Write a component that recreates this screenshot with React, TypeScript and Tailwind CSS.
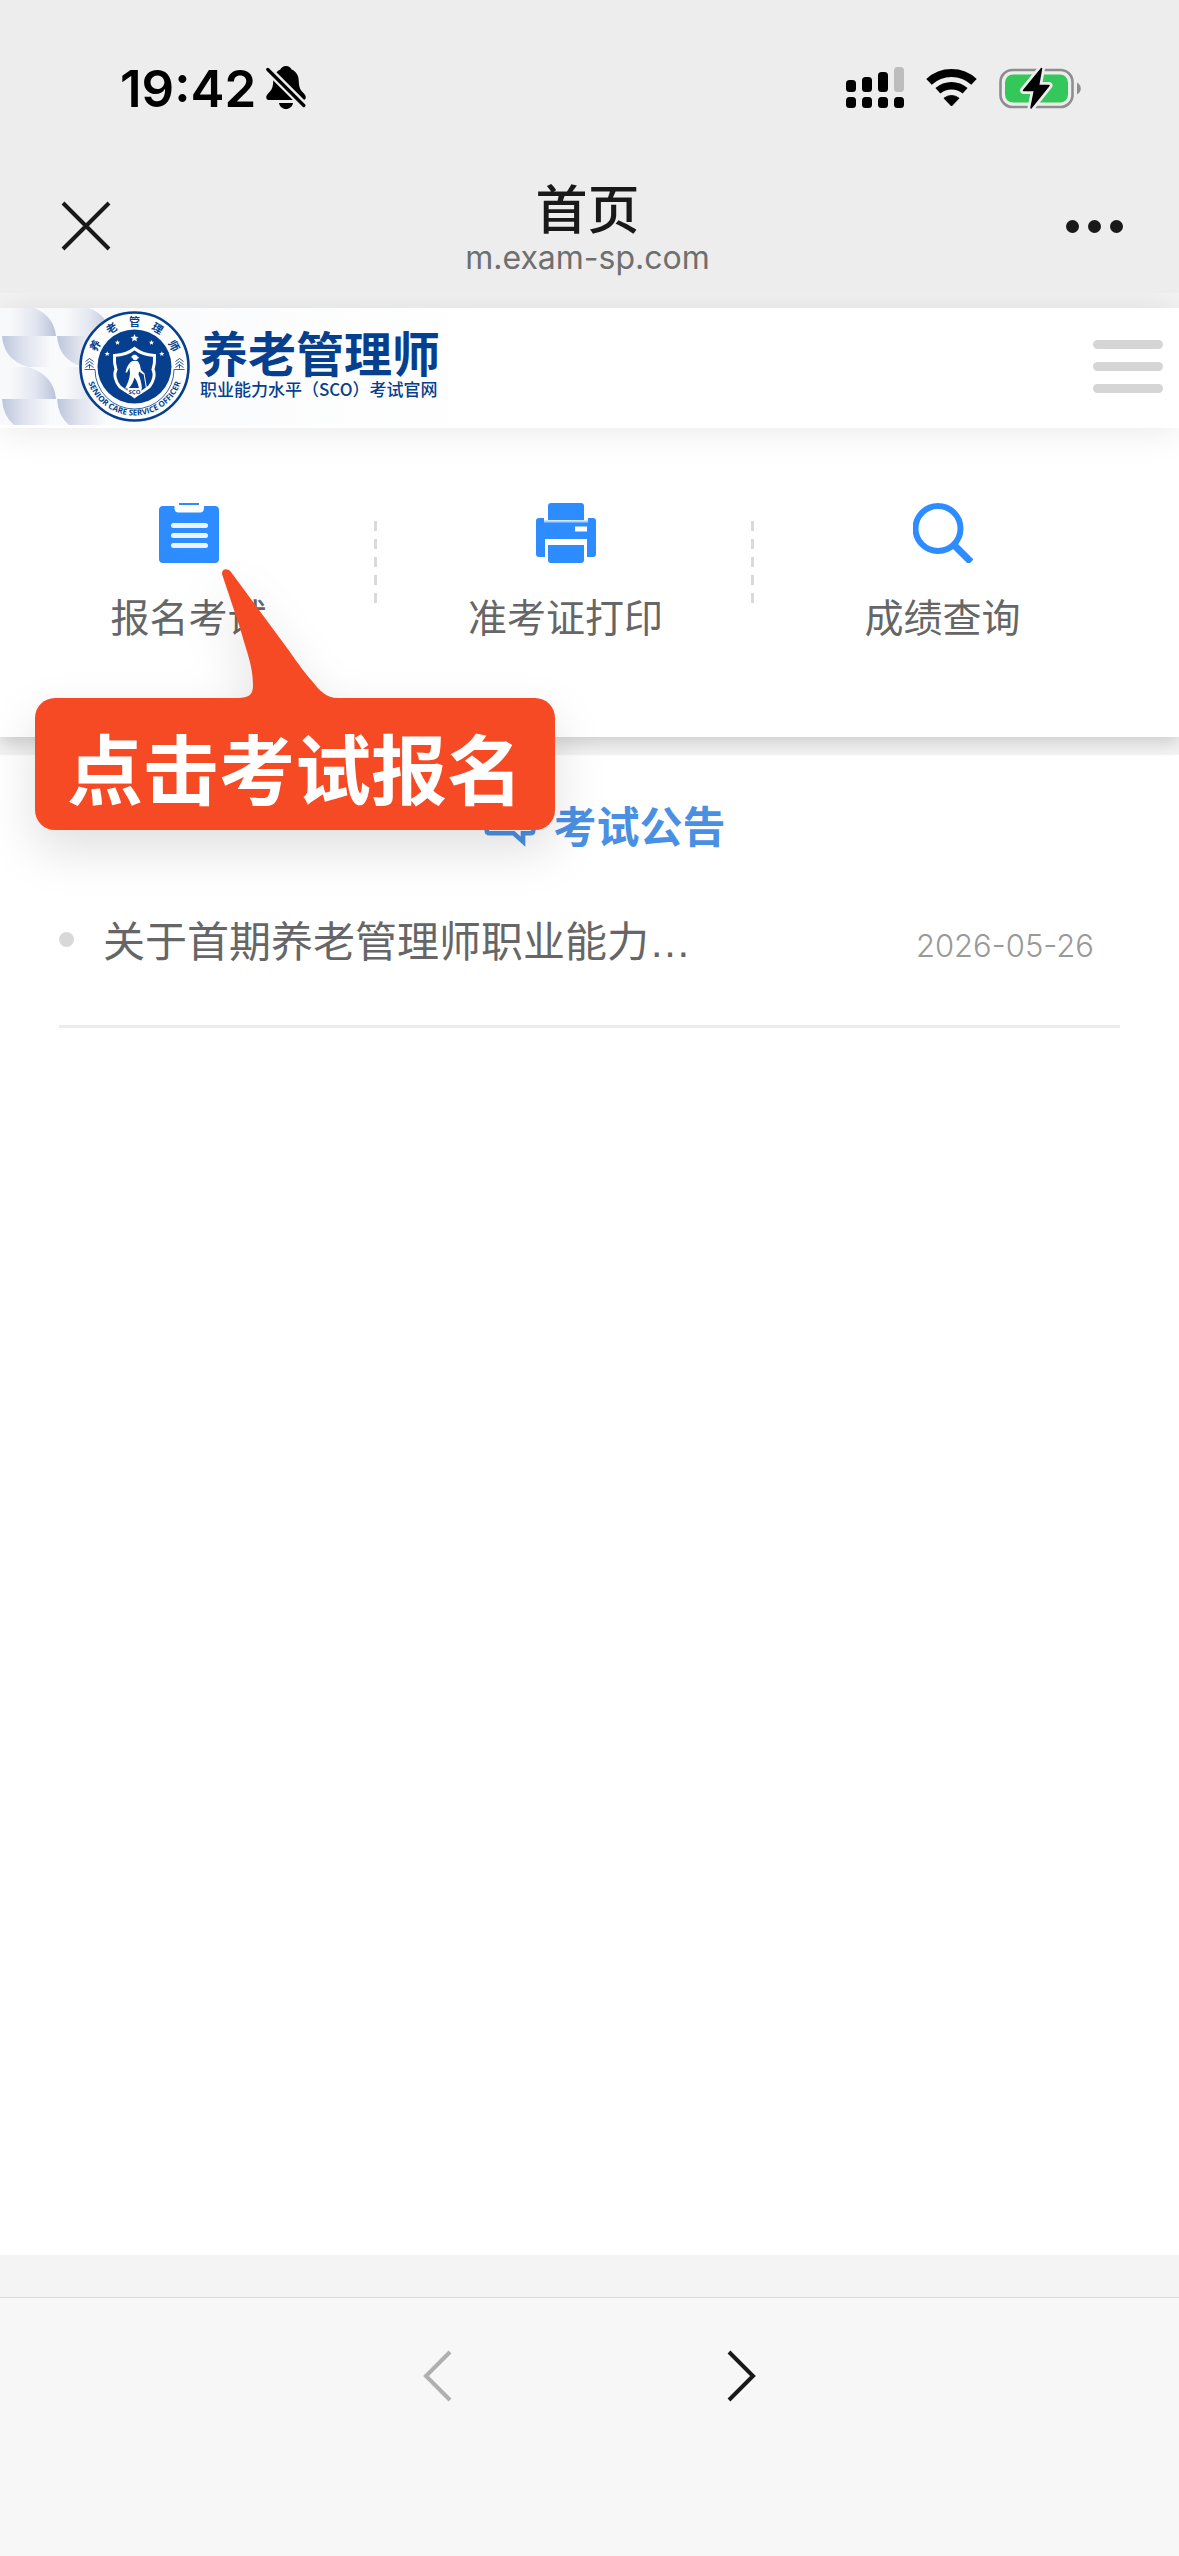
import React from "react";

const STAR = "M0 -4L1.1 -1.3L4 -1.1L1.8 0.7L2.5 3.4L0 1.9L-2.5 3.4L-1.8 0.7L-4 -1.1L-1.1 -1.3Z";

function BellOff() {
  return (
    <svg viewBox="0 0 40 44" className="h-11 w-10" aria-label="静音">
      <path
        d="M20 0C17 0 15 2 14.400 3.600C9.500 5.600 7.200 10 7.200 15.500C7 21 6 23.500 3 26.500C1 28.500 0 30 0.300 32C0.600 33.600 1.700 34 3.200 34H36.800C38.300 34 39.400 33.600 39.700 32C40 30 39 28.500 37 26.500C34 23.500 33 21 32.800 15.500C32.800 10 30.500 5.600 25.600 3.600C25 2 23 0 20 0Z"
        fill="#000"
      />
      <path d="M13 37H27C26.500 40.500 23.500 43 20 43C16.500 43 13.500 40.500 13 37Z" fill="#000" />
      <path d="M-1 0.500L41 42.500" stroke="#ededed" strokeWidth="8" />
      <path d="M1.800 3.500L37.800 39.500" stroke="#000" strokeWidth="3.200" strokeLinecap="round" />
    </svg>
  );
}

function Signal() {
  return (
    <svg viewBox="0 0 58 42" className="h-[42px] w-[58px]" aria-label="信号">
      <rect x="0" y="13" width="10" height="12" rx="3.500" />
      <rect x="16" y="10" width="10" height="15" rx="3.500" />
      <rect x="32" y="5" width="10" height="20" rx="3.500" />
      <rect x="48" y="0" width="10" height="25" rx="3.500" fill="#bdbdbd" />
      {[0, 16, 32, 48].map((x) => (
        <rect key={x} x={x} y="30" width="10" height="11" rx="3.500" />
      ))}
    </svg>
  );
}

function Wifi() {
  return (
    <svg viewBox="0 0 51 38" className="h-[38px] w-[51px]" aria-label="无线网络">
      <path d="M3 12.900A33 33 0 0 1 48 12.900" fill="none" stroke="#000" strokeWidth="8" />
      <path d="M11.900 21.800A20.500 20.500 0 0 1 39.100 21.800" fill="none" stroke="#000" strokeWidth="7.500" />
      <path d="M18 29.200A12 12 0 0 1 33 29.200L25.500 37Z" stroke="#000" strokeWidth="1" strokeLinejoin="round" />
    </svg>
  );
}

function Battery() {
  return (
    <svg viewBox="0 0 82 42" className="h-[42px] w-[82px]" aria-label="充电中">
      <rect x="1.500" y="3" width="72" height="37" rx="12" fill="none" stroke="#8e8e8e" strokeWidth="2.600" />
      <path d="M78 15.500C80.500 17 81.800 19 81.800 21.500C81.800 24 80.500 26 78 27.500Z" fill="#8e8e8e" />
      <rect x="6" y="7.500" width="63" height="28" rx="8" fill="#34c759" />
      <path
        d="M42.500 1.500L24.500 23.500H35.500L32 41L50 18.500H39.500Z"
        fill="#000"
        stroke="#ededed"
        strokeWidth="7"
        strokeLinejoin="round"
        paintOrder="stroke"
      />
      <path d="M42.500 1.500L24.500 23.500H35.500L32 41L50 18.500H39.500Z" fill="#000" stroke="#000" strokeWidth="1.500" strokeLinejoin="round" />
    </svg>
  );
}

function Emblem() {
  const ring = [
    { c: "养", a: -62 },
    { c: "老", a: -31 },
    { c: "管", a: 0 },
    { c: "理", a: 31 },
    { c: "师", a: 62 },
  ];
  return (
    <svg viewBox="0 0 192 117" className="h-[117px] w-48 shrink-0" aria-label="养老管理师徽标">
      <defs>
        <linearGradient id="toRight">
          <stop offset="0.150" stopColor="#c3cbe0" stopOpacity="0" />
          <stop offset="0.600" stopColor="#c3cbe0" stopOpacity="0.400" />
          <stop offset="1" stopColor="#b9c2da" />
        </linearGradient>
        <linearGradient id="toLeft">
          <stop offset="0" stopColor="#bcc5dc" />
          <stop offset="0.400" stopColor="#c3cbe0" stopOpacity="0.500" />
          <stop offset="0.900" stopColor="#c3cbe0" stopOpacity="0" />
        </linearGradient>
        <path id="ringBottom" d="M-49 0A49 49 0 0 0 49 0" />
      </defs>
      {[0, 55].map((x) => (
        <g key={x} transform={`translate(${x} 0)`}>
          <path d="M2 28V0H34Q54 8 56 28Z" fill="url(#toRight)" />
          <path d="M2 28H56V59H28Q4 52 2 28Z" fill="url(#toLeft)" />
          <path d="M2 91V59H28Q54 67 56 91Z" fill="url(#toRight)" />
          <path d="M2 91H56V117H14Q3 108 2 91Z" fill="url(#toLeft)" />
        </g>
      ))}
      <g transform="translate(134.500 58.500)" fill="#063f8e">
        <circle r="54" fill="#fff" stroke="#063f8e" strokeWidth="2.600" />
        <circle r="37" />
        {ring.map((r) => (
          <text
            key={r.c}
            transform={`rotate(${r.a})`}
            y="-40.500"
            textAnchor="middle"
            className="font-['Noto_Sans_CJK_SC',sans-serif] text-[11px] font-bold"
          >
            {r.c}
          </text>
        ))}
        <text className="font-['Open_Sans',sans-serif] text-[8px] font-bold">
          <textPath href="#ringBottom" startOffset="50%" textAnchor="middle">
            SENIOR CARE SERVICE OFFICER
          </textPath>
        </text>
        <path d="M-50 3H-39.500A39.500 39.500 0 0 0 39.500 3H50" fill="none" stroke="#063f8e" strokeWidth="0.800" />
        {[-45, 45].map((x) => (
          <path
            key={x}
            d={`M${x - 4} -5L${x} -8L${x + 4} -5M${x - 4} -2L${x} -5L${x + 4} -2M${x - 4} 1L${x} -2L${x + 4} 1M${x} -2V2`}
            fill="none"
            stroke="#063f8e"
            strokeWidth="0.900"
          />
        ))}
        <g fill="#fff">
          <path d={STAR} transform="translate(0 -28.500)" />
          <path d={STAR} transform="translate(-17 -24) scale(0.650)" />
          <path d={STAR} transform="translate(17 -24) scale(0.650)" />
          <path d={STAR} transform="translate(-27.300 -12.700) scale(0.650)" />
          <path d={STAR} transform="translate(27.300 -12.700) scale(0.650)" />
        </g>
        <path
          d="M0 -18C-5 -14 -12 -11.500 -20 -11C-20.500 -4 -19.500 0 -18.500 3C-21 8 -19 15 -15 20C-11 24 -5 26 0 30C5 26 11 24 15 20C19 15 21 8 18.500 3C19.500 0 20.500 -4 20 -11C12 -11.500 5 -14 0 -18Z"
          fill="none"
          stroke="#fff"
          strokeWidth="3"
        />
        <g fill="#fff">
          <path d="M-4 -9.500L-2.500 -10C-2.500 -12.500 2.500 -12.500 3 -10L5 -8.500L3 -8C3 -5.500 -1.500 -5.500 -2 -8.500Z" />
          <path d="M-2 -5.500L3 -5.500C5.500 -3 6 1 6.500 3.500L10 7L9 8L4.500 5L4 8C6 12 7 17 7.500 22H4.500C3.500 17 2 13.500 0 11C-1 15 -3 19 -6 22H-9.500C-7 17 -5 13 -4.500 7L-5 1L-7.500 6H-9C-8 1 -6 -3.500 -2 -5.500Z" />
        </g>
        <path d="M9.500 7L12 22" stroke="#fff" strokeWidth="1" />
        <rect x="-7" y="21.500" width="14" height="6" fill="#fff" />
        <text y="27" textAnchor="middle" className="font-['Open_Sans',sans-serif] text-[6px] font-bold">
          SCO
        </text>
      </g>
    </svg>
  );
}

function ClipboardIcon() {
  return (
    <svg viewBox="0 0 60 60" className="size-[60px]" aria-hidden="true">
      <path d="M20 0H40V2H20Z" fill="#2d8cff" />
      <path d="M4 3H15.500V5C15.500 8 17 9.500 19.500 9.500H41C43.500 9.500 45 8 45 5V3H56C58.500 3 60 4.500 60 7V56C60 58.500 58.500 60 56 60H4C1.500 60 0 58.500 0 56V7C0 4.500 1.500 3 4 3Z" fill="#2d8cff" />
      <path d="M14.500 22.500H46.500M14.500 32.500H46.500M14.500 42.500H46.500" stroke="#eaf3ff" strokeWidth="5" strokeLinecap="round" />
    </svg>
  );
}

function PrinterIcon() {
  return (
    <svg viewBox="0 0 60 60" className="size-[60px]" aria-hidden="true" fill="#2d8cff">
      <path d="M15 0H45Q48 0 48 3V17H12V3Q12 0 15 0Z" />
      <path d="M3 15H8V19H52V15H57Q60 15 60 18V51Q60 54 57 54H51V36H9V54H3Q0 54 0 51V18Q0 15 3 15Z" />
      <path d="M8 18.500H52" stroke="#a9d0ff" strokeWidth="2" />
      <path d="M39 26H51" stroke="#fff" strokeWidth="5" />
      <path d="M12 42H48V57Q48 60 45 60H15Q12 60 12 57Z" />
    </svg>
  );
}

function SearchIcon() {
  return (
    <svg viewBox="0 0 60 60" className="size-[60px]" aria-hidden="true">
      <circle cx="25" cy="25.500" r="22.500" fill="none" stroke="#2d8cff" strokeWidth="6" />
      <path d="M41 42L58 59" stroke="#2d8cff" strokeWidth="7" />
    </svg>
  );
}

const entries = [
  { label: "报名考试", icon: <ClipboardIcon /> },
  { label: "准考证打印", icon: <PrinterIcon /> },
  { label: "成绩查询", icon: <SearchIcon /> },
];

function Divider() {
  return (
    <svg viewBox="0 0 3 84" className="absolute top-[93px] right-0 h-[84px] w-[3px]" aria-hidden="true">
      <path d="M1.500 0V84" stroke="#d9d9d9" strokeWidth="3" strokeDasharray="10 8" />
    </svg>
  );
}

function Callout() {
  return (
    <div className="pointer-events-none absolute top-[141px] left-[35px] z-20 drop-shadow-[0_20px_24px_rgba(0,0,0,0.12)]">
      <svg viewBox="0 0 320 130" className="block h-[130px] w-80" aria-hidden="true">
        <path
          d="M187 5C186.500 -0.500 193 -1.500 196 3L255 83C264 96 270 104 277 112C285 122 291 129 303 129V130H200V129C213 129 218 127 218 116C218 97 212 84 205 59Z"
          fill="#f64a24"
        />
      </svg>
      <div className="-mt-px flex h-[132px] w-[520px] items-center justify-center rounded-[20px] bg-[#f64a24] pt-1 text-[76px] leading-none font-bold text-white">
        点击考试报名
      </div>
    </div>
  );
}

export default function App() {
  return (
    <div className="flex min-h-screen flex-col bg-[#f4f4f4] font-['Noto_Sans_CJK_SC',sans-serif]">
      <header className="bg-[#ededed]">
        <div className="flex h-44 items-center justify-between pr-[98px] pl-[120px]">
          <div className="flex items-center gap-[10px]">
            <span className="font-[Inter,sans-serif] text-[51px] leading-none font-semibold text-black">19:42</span>
            <BellOff />
          </div>
          <div className="flex items-center gap-[22px]">
            <Signal />
            <Wifi />
            <Battery />
          </div>
        </div>
        <div className="grid h-[117px] grid-cols-[60px_1fr_60px] items-start px-14">
          <button aria-label="关闭" className="mt-5 flex size-[60px] items-center justify-center">
            <svg viewBox="0 0 50 50" className="size-[50px]">
              <path d="M2 2L48 48M48 2L2 48" stroke="#191919" strokeWidth="4" />
            </svg>
          </button>
          <div className="flex flex-col items-center pr-1">
            <h1 className="text-[52px] leading-[62px] font-medium text-[#191919]">首页</h1>
            <p className="font-[Inter,sans-serif] text-[32px] leading-10 text-[#6f6f6f]">m.exam-sp.com</p>
          </div>
          <button aria-label="更多" className="mt-5 flex h-[60px] items-center justify-end gap-[9px]">
            <span className="size-[13px] rounded-full bg-[#191919]" />
            <span className="size-[13px] rounded-full bg-[#191919]" />
            <span className="size-[13px] rounded-full bg-[#191919]" />
          </button>
        </div>
      </header>

      <main className="relative flex flex-1 flex-col overflow-hidden bg-[#f4f4f4] pt-[15px]">
        <div className="relative z-10 flex h-[120px] items-start justify-between bg-white pr-4 shadow-[0_0_40px_rgba(0,0,0,0.1)]">
          <a href="#home" className="flex h-[117px] items-start bg-linear-to-r from-[#f8f9fb] to-white pr-10">
            <Emblem />
            <span className="ml-2 flex flex-col pt-4 text-[#063f8e]">
              <span className="text-[48px] leading-[54px] font-bold">养老管理师</span>
              <span className="text-[17px] leading-[22px] font-medium whitespace-nowrap">职业能力水平（SCO）考试官网</span>
            </span>
          </a>
          <button aria-label="菜单" className="mt-8 flex w-[70px] flex-col gap-[13px]">
            <span className="h-[9px] w-full rounded-full bg-[#d5d5d5]" />
            <span className="h-[9px] w-full rounded-full bg-[#d5d5d5]" />
            <span className="h-[9px] w-full rounded-full bg-[#d5d5d5]" />
          </button>
        </div>

        <section className="relative z-[5] h-[309px] bg-white shadow-[0_6px_16px_rgba(0,0,0,0.16)]">
          <nav className="mr-12 grid grid-cols-3">
            {entries.map((e, i) => (
              <a key={e.label} href="#entry" className="relative flex flex-col items-center pt-[75px]">
                {e.icon}
                <span className="mt-[25px] text-[39px] leading-[54px] text-[#666]">{e.label}</span>
                {i < 2 && <Divider />}
              </a>
            ))}
          </nav>
          <Callout />
        </section>

        <section className="mt-[18px] flex-1 bg-white">
          <h2 className="flex items-center justify-center gap-[18px] pt-[39px] pl-[30px] text-[43px] leading-[60px] font-bold text-[#4a90e2]">
            <svg viewBox="0 0 56 52" className="size-[52px]" fill="none" stroke="#4a90e2" strokeWidth="5" aria-hidden="true">
              <path d="M6 3H50Q53 3 53 6V33Q53 36 50 36H42V45L32 36H6Q3 36 3 33V6Q3 3 6 3Z" />
            </svg>
            考试公告
          </h2>
          <ul className="mx-[59px] mt-[37px]">
            <li className="flex h-[137px] items-start border-b-[3px] border-[#ececec] pt-[18px] pr-[26px]">
              <span className="mt-[23px] mr-[29px] size-[15px] rounded-full bg-[#d8d8d8]" />
              <a href="#notice" className="text-[42px] leading-[60px] text-[#666]">
                关于首期养老管理师职业能力<span className="font-['Liberation_Sans',sans-serif]">…</span>
              </a>
              <time className="mt-[10px] ml-auto font-[Inter,sans-serif] text-[31px] leading-[54px] font-light text-[#999]">2026-05-26</time>
            </li>
          </ul>
        </section>
      </main>

      <footer className="pt-[42px]">
        <div className="flex h-[259px] items-start justify-center gap-[271px] border-t border-[#d9d9d9] bg-[#f7f7f7] pt-[50px]">
          <button aria-label="后退" disabled>
            <svg viewBox="0 0 32 56" className="h-14 w-8" fill="none" stroke="#b0b0b0" strokeWidth="4">
              <path d="M28 4L4 28L28 52" />
            </svg>
          </button>
          <button aria-label="前进">
            <svg viewBox="0 0 32 56" className="h-14 w-8" fill="none" stroke="#191919" strokeWidth="4">
              <path d="M4 4L28 28L4 52" />
            </svg>
          </button>
        </div>
      </footer>
    </div>
  );
}
